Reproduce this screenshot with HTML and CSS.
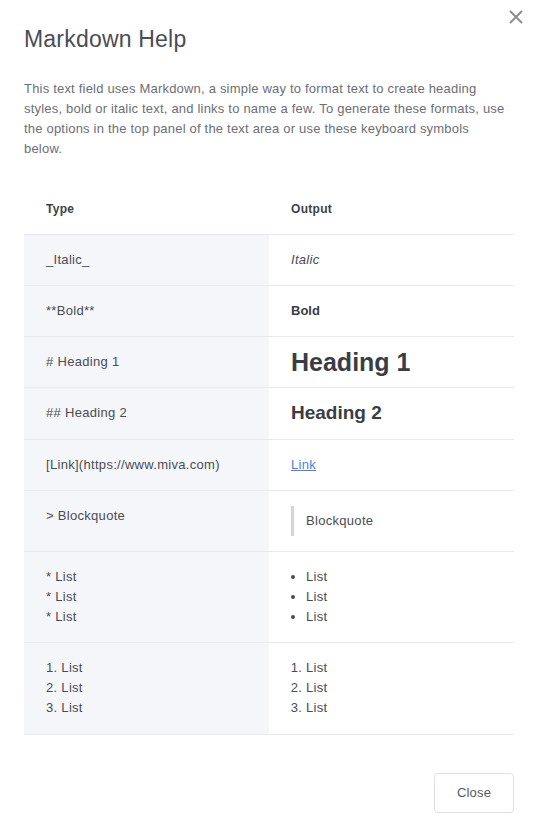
FILE: index.html
```html
<!DOCTYPE html>
<html lang="en">
<head>
    <meta charset="UTF-8">
    <title>Markdown Help</title>
    <link rel="stylesheet" href="styles.css">
</head>
<body>
    <div class="modal">
        <button class="modal-x" aria-label="Close">
            <svg width="14" height="14" viewBox="0 0 14 14"><path d="M1 1L13 13M13 1L1 13" stroke="#8b8d94" stroke-width="2" fill="none"/></svg>
        </button>

        <h1 class="modal-title">Markdown Help</h1>

        <p class="intro">This text field uses Markdown, a simple way to format text to create heading styles, bold or italic text, and links to name a few. To generate these formats, use the options in the top panel of the text area or use these keyboard symbols below.</p>

        <table class="help-table">
            <thead>
                <tr><th>Type</th><th>Output</th></tr>
            </thead>
            <tbody>
                <tr><td>_Italic_</td><td><em>Italic</em></td></tr>
                <tr><td>**Bold**</td><td><strong>Bold</strong></td></tr>
                <tr><td># Heading 1</td><td><div class="h1">Heading 1</div></td></tr>
                <tr><td>## Heading 2</td><td><div class="h2">Heading 2</div></td></tr>
                <tr><td>[Link](https://www.miva.com)</td><td><a href="#">Link</a></td></tr>
                <tr><td>&gt; Blockquote</td><td><blockquote>Blockquote</blockquote></td></tr>
                <tr>
                    <td>* List<br>* List<br>* List</td>
                    <td><ul><li>List</li><li>List</li><li>List</li></ul></td>
                </tr>
                <tr>
                    <td>1. List<br>2. List<br>3. List</td>
                    <td><ol><li>List</li><li>List</li><li>List</li></ol></td>
                </tr>
            </tbody>
        </table>

        <div class="footer">
            <button class="btn">Close</button>
        </div>
    </div>
</body>
</html>
```

FILE: styles.css
```css
body{
    margin: 0;
    background-color: #ffffff;
    font-family: "Liberation Sans", Arial, sans-serif;
    color: #4a4c53;
}

.modal{
    position: relative;
    width: 490px;
    padding: 25px 19px 10px 24px;
}

.modal-x{
    position: absolute;
    top: 10px;
    right: 10px;
    padding: 0;
    border: none;
    background: none;
    line-height: 0;
    cursor: pointer;
}

.modal-title{
    margin: 0;
    font-size: 23px;
    font-weight: normal;
    letter-spacing: 0.2px;
    line-height: 28px;
    color: #4b4d55;
}

.intro{
    max-width: 485px;
    margin: 26px 0 24px 0;
    font-size: 13px;
    line-height: 20px;
    letter-spacing: 0.2px;
    color: #6c6e76;
}

.help-table{
    width: 490px;
    border-collapse: collapse;
    font-size: 13px;
    line-height: 20px;
    letter-spacing: 0.3px;
}

.help-table th{
    text-align: left;
    font-size: 12px;
    font-weight: bold;
    color: #40424a;
    padding: 15.5px 22px 15px 22px;
    border-bottom: 1px solid #e8e9ed;
}

.help-table td{
    width: 50%;
    padding: 15px 22px 15.25px 22px;
    vertical-align: top;
    border-bottom: 1px solid #e8e9ed;
    color: #4a4c53;
}

.help-table td:first-child{
    background-color: #f5f6fa;
}

.help-table strong{
    color: #3b3d44;
    letter-spacing: 0;
}

.h1{
    font-size: 25px;
    font-weight: bold;
    line-height: 20px;
    letter-spacing: 0;
    color: #3b3d46;
}

.h2{
    font-size: 19px;
    font-weight: bold;
    line-height: 20px;
    letter-spacing: 0;
    color: #3b3d46;
}

.help-table a{
    color: #4a7cf0;
    text-decoration: underline;
}

blockquote{
    margin: 0;
    padding: 5px 0 5px 12px;
    border-left: 3px solid #d3d5da;
}

ul, ol{
    margin: 0;
    padding-left: 15px;
}

.footer{
    display: flex;
    justify-content: flex-end;
    margin-top: 38px;
}

.btn{
    width: 80px;
    height: 40px;
    border: 1px solid #dfe0e4;
    border-radius: 4px;
    background-color: #ffffff;
    font-family: "Liberation Sans", Arial, sans-serif;
    font-size: 13px;
    letter-spacing: 0.2px;
    color: #555a63;
}
```
